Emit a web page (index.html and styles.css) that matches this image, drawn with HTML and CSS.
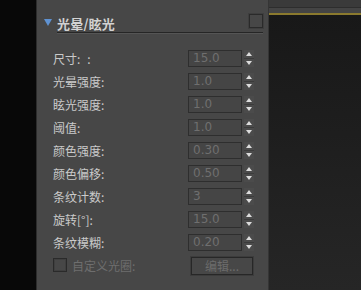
FILE: index.html
```html
<!DOCTYPE html>
<html lang="zh-CN">
<head>
  <meta charset="UTF-8">
  <title>光晕/眩光</title>
  <link rel="stylesheet" href="styles.css">
</head>
<body>
  <div class="app">
    <div class="strip"></div>

    <div class="panel">
      <div class="header">
        <span class="arrow"></span>
        <span class="title">光晕/眩光</span>
        <span class="box"></span>
      </div>

      <div class="rows">
        <div class="row"><span class="lbl">尺寸:<span class="gap"></span>:</span><span class="num">15.0</span><span class="spin"><i class="up"></i><i class="down"></i></span></div>
        <div class="row"><span class="lbl">光晕强度:</span><span class="num">1.0</span><span class="spin"><i class="up"></i><i class="down"></i></span></div>
        <div class="row"><span class="lbl">眩光强度:</span><span class="num">1.0</span><span class="spin"><i class="up"></i><i class="down"></i></span></div>
        <div class="row"><span class="lbl">阈值:</span><span class="num">1.0</span><span class="spin"><i class="up"></i><i class="down"></i></span></div>
        <div class="row"><span class="lbl">颜色强度:</span><span class="num">0.30</span><span class="spin"><i class="up"></i><i class="down"></i></span></div>
        <div class="row"><span class="lbl">颜色偏移:</span><span class="num">0.50</span><span class="spin"><i class="up"></i><i class="down"></i></span></div>
        <div class="row"><span class="lbl">条纹计数:</span><span class="num">3</span><span class="spin"><i class="up"></i><i class="down"></i></span></div>
        <div class="row"><span class="lbl">旋转[°]:</span><span class="num">15.0</span><span class="spin"><i class="up"></i><i class="down"></i></span></div>
        <div class="row"><span class="lbl">条纹模糊:</span><span class="num">0.20</span><span class="spin"><i class="up"></i><i class="down"></i></span></div>
        <div class="row last">
          <span class="check"></span><span class="lbl dim">自定义光圈:</span>
          <span class="btn">编辑...</span>
        </div>
      </div>
    </div>

    <div class="view">
      <div class="topbar"></div>
      <div class="gold"></div>
      <div class="dark"></div>
    </div>
  </div>
</body>
</html>
```

FILE: styles.css
```css
body {
  margin: 0;
  background: #0a0a0a;
  font-family: "Noto Sans CJK SC", "Liberation Sans", sans-serif;
  font-size: 12px;
}

.app {
  display: flex;
  width: 361px;
  height: 290px;
  overflow: hidden;
}

.strip {
  width: 36px;
  background: #080808;
}

.panel {
  width: 231px;
  background: #474747;
  border-left: 1px solid #2c2c2c;
}

.header {
  display: flex;
  align-items: center;
  box-sizing: border-box;
  height: 33px;
  padding-top: 15px;
  padding-bottom: 2px;
  margin-left: 7px;
  position: relative;
}

.arrow {
  width: 0;
  height: 0;
  border-left: 4px solid transparent;
  border-right: 4px solid transparent;
  border-top: 7px solid #5f92d2;
  margin-right: 5px;
  margin-top: -2px;
}

.title {
  color: #d2d2d2;
  font-weight: bold;
  font-size: 13px;
  flex: 1;
  letter-spacing: 0.2px;
}

.header::after {
  content: "";
  position: absolute;
  left: 13px;
  right: 5px;
  bottom: 0;
  height: 1px;
  background: #262626;
  box-shadow: 0 1px 0 #555555;
}

.box {
  width: 12px;
  height: 12px;
  border: 1px solid #2a2a2a;
  margin-right: 5px;
  margin-top: -4px;
  box-shadow: 0 0 0 1px #3e3e3e;
}

.rows {
  padding: 14px 0 0 16px;
}

.row {
  display: flex;
  align-items: center;
  height: 23px;
  color: #cacaca;
}

.lbl {
  width: 135px;
}

.gap {
  display: inline-block;
  width: 7px;
}

.num {
  box-sizing: border-box;
  width: 54px;
  height: 17px;
  border: 1px solid #2e2e2e;
  background: #454545;
  color: #6f6f6f;
  font-family: "DejaVu Sans", sans-serif;
  font-size: 12px;
  line-height: 15px;
  padding-left: 4px;
}

.spin {
  display: flex;
  flex-direction: column;
  width: 10px;
  height: 17px;
  margin-left: 2px;
  background: #4b4b4b;
}

.spin i {
  flex: 1;
  display: flex;
  align-items: center;
  justify-content: center;
}

.spin .up {
  border-bottom: 1px solid #3b3b3b;
}

.spin .up::before,
.spin .down::before {
  content: "";
  width: 0;
  height: 0;
  border-left: 3px solid transparent;
  border-right: 3px solid transparent;
}

.spin .up::before {
  border-bottom: 4px solid #dcdcdc;
}

.spin .down::before {
  border-top: 4px solid #dcdcdc;
}

.last {
  height: 22px;
}

.check {
  box-sizing: border-box;
  width: 14px;
  height: 14px;
  border: 1px solid #2a2a2a;
  margin-right: 5px;
  box-shadow: inset 0 0 0 1px #3f3f3f;
}

.dim {
  color: #6e6e6e;
  width: 119px;
}

.btn {
  box-sizing: border-box;
  width: 62px;
  height: 18px;
  border: 1px solid #272727;
  box-shadow: 0 0 0 1px #3c3c3c;
  color: #6c6c6c;
  text-align: center;
  line-height: 16px;
  margin-top: 1px;
}

.view {
  flex: 1;
  display: flex;
  flex-direction: column;
  border-left: 1px solid #353535;
}

.topbar {
  height: 13px;
  background: linear-gradient(#3a3a3a 0, #3a3a3a 7px, #2d2d2d 7px, #2d2d2d 8px, #444444 8px);
}

.gold {
  height: 2px;
  background: #8b7a2e;
}

.dark {
  flex: 1;
  background: linear-gradient(#181818, #262626);
}
```
